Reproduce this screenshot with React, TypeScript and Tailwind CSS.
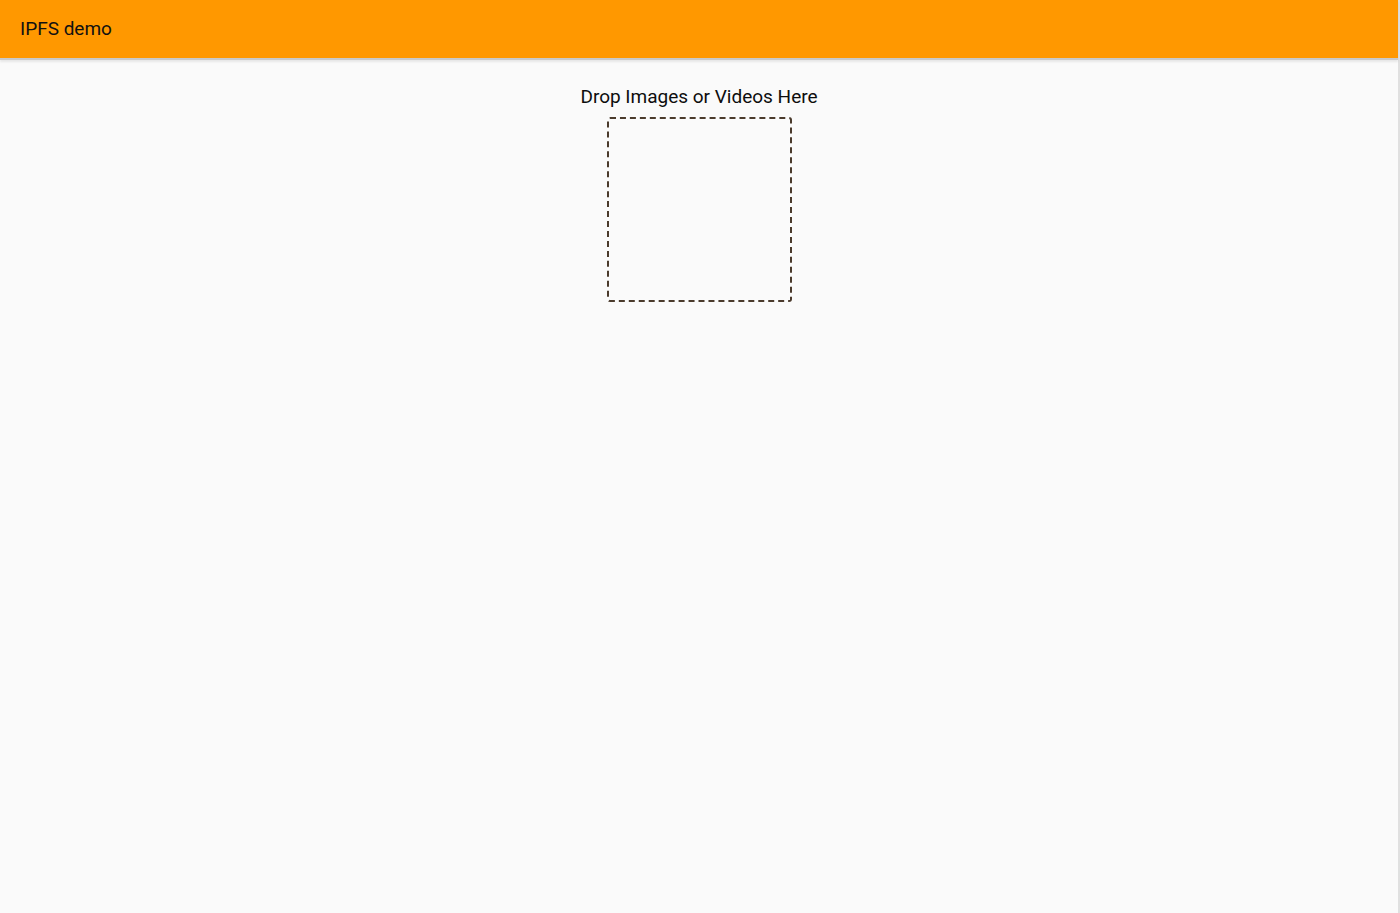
export default function App() {
  return (
    <div className="min-h-[913px] w-full bg-[#fafafa] text-[#1a1a1a] border-r-2 border-[#e0e0e0]" style={{ fontFamily: 'Roboto, "Liberation Sans", sans-serif' }}>
      {/* Toolbar */}
      <header className="h-[60px] bg-[#ff9800] flex items-center px-5 border-b-2 border-[#c9c9c9] shadow-[0_2px_2px_rgba(0,0,0,0.08)]">
        <span className="text-[19px] text-[#111] pt-[1px]">IPFS demo</span>
      </header>

      {/* Drop zone */}
      <main className="flex flex-col items-center pt-[25px]">
        <h2 className="text-[19px] leading-[24px] text-[#0d0d0d]">Drop Images or Videos Here</h2>
        <div className="mt-[8px] w-[185px] h-[185px] border-2 border-dashed border-[#4a3a2c] rounded-[3px]"></div>
      </main>
    </div>
  );
}
